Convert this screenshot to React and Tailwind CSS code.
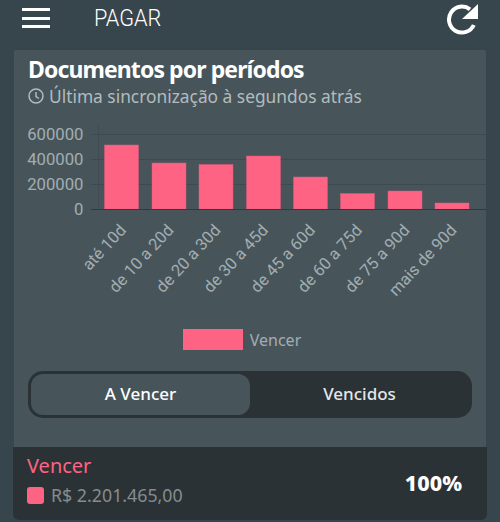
import React from "react";

const bars = [
  { label: "até 10d", x: 104.5, top: 145 },
  { label: "de 10 a 20d", x: 152, top: 163 },
  { label: "de 20 a 30d", x: 199, top: 164.5 },
  { label: "de 30 a 45d", x: 246.5, top: 156 },
  { label: "de 45 a 60d", x: 293.5, top: 177 },
  { label: "de 60 a 75d", x: 340.5, top: 193.5 },
  { label: "de 75 a 90d", x: 388, top: 191 },
  { label: "mais de 90d", x: 435, top: 203 },
];

const ticks = [
  { label: "600000", y: 134 },
  { label: "400000", y: 159 },
  { label: "200000", y: 184 },
  { label: "0", y: 209 },
];

function Chart() {
  // offsets: svg starts at x=14, y=120 of the page
  return (
    <svg width="472" height="200" viewBox="14 120 472 200" className="block shrink-0">
      <line x1="98.5" y1="125" x2="98.5" y2="209" stroke="#3f4c52" strokeWidth="1" />
      {ticks.slice(0, 3).map((t) => (
        <line key={t.y} x1="91" y1={t.y + 0.5} x2="486" y2={t.y + 0.5} stroke="#3d4a50" strokeWidth="1" />
      ))}
      {bars.map((b) => (
        <rect key={b.label} x={b.x} y={b.top} width="34" height={209 - b.top} fill="#ff6384" stroke="#d95a78" strokeWidth="0.5" />
      ))}
      <line x1="91" y1="209.5" x2="486" y2="209.5" stroke="#2f3a3f" strokeWidth="1.2" />
      {ticks.map((t) => (
        <text key={t.label} x="83.5" y={t.y + 6} textAnchor="end" fill="#a3adb1" fontSize="16.7" fontFamily="Roboto, sans-serif">
          {t.label}
        </text>
      ))}
      {bars.map((b) => (
        <text
          key={b.label}
          transform={`translate(${b.x + 22.5} 231) rotate(-47)`}
          textAnchor="end"
          fill="#a3adb1"
          fontSize="16.5"
          fontFamily="Roboto, sans-serif"
        >
          {b.label}
        </text>
      ))}
    </svg>
  );
}

export default function App() {
  return (
    <div className="w-[500px] h-[522px] overflow-hidden bg-[#37464d] font-['Noto_Sans',sans-serif] flex flex-col">
      <header className="h-[36px] mb-[14px] flex items-center pl-[22px] pr-[21px] shrink-0">
        <div className="w-[28px] flex flex-col gap-[5.5px]">
          <div className="h-[3px] bg-white" />
          <div className="h-[3px] bg-white" />
          <div className="h-[3px] bg-white" />
        </div>
        <div className="ml-[44px] text-white text-[23px] leading-none font-['Roboto',sans-serif] font-light scale-x-[0.94] origin-left">PAGAR</div>
        <svg className="ml-auto mt-[2px]" width="33" height="32" viewBox="0 0 33 32">
          <path d="M27.8 22A13 13 0 1 1 24 6.3" fill="none" stroke="#fff" strokeWidth="4" />
          <path d="M32 1V16H16Z" fill="#fff" />
        </svg>
      </header>

      <main className="mx-[14px] h-[397px] bg-[#47555b] rounded-t-[2px] shrink-0 flex flex-col">
        <div className="pl-[14px] pt-[5px] h-[70px] shrink-0">
          <div className="text-white font-bold text-[23px] leading-[28px] tracking-[-0.9px] whitespace-nowrap">Documentos por períodos</div>
          <div className="flex items-center gap-[5px] text-[#b3bbbe] text-[17.35px] leading-[22px] mt-[2px] whitespace-nowrap">
            <svg width="16" height="16" viewBox="0 0 16 16" fill="none" stroke="#b3bbbe" strokeWidth="1.5" className="shrink-0">
              <circle cx="8" cy="8" r="7" />
              <path d="M8 4V8.5L11 10.5" />
            </svg>
            <span>Última sincronização à segundos atrás</span>
          </div>
        </div>
        <Chart />
        <div className="flex items-center justify-center gap-[7px] mt-[9px] h-[21px] pr-[16px] shrink-0">
          <div className="w-[60px] h-[21px] bg-[#ff6384]" />
          <span className="text-[#a3adb1] text-[16px]">Vencer</span>
        </div>
        <div className="mt-[21px] mx-[14px] h-[47px] bg-[#2b3235] rounded-[15px] p-[3px] flex shrink-0">
          <div className="w-[219px] bg-[#47555b] rounded-[12px] flex items-center justify-center pb-[2px] text-white text-[17px] font-medium">A Vencer</div>
          <div className="flex-1 flex items-center justify-center pb-[2px] text-[#e4e7e8] text-[17px] font-medium">Vencidos</div>
        </div>
      </main>

      <footer className="mx-[13px] h-[73px] bg-[#2b3235] rounded-b-[6px] shrink-0 flex items-center justify-between pl-[14px] pr-[25px]">
        <div className="flex flex-col self-start pt-[7px]">
          <span className="text-[#ff6384] text-[20px] leading-[24px]">Vencer</span>
          <div className="flex items-center gap-[7px] mt-[7px]">
            <div className="w-[17px] h-[17px] bg-[#ff6384] rounded-[3px]" />
            <span className="text-[#868c8f] text-[17.8px] leading-[20px]">R$ 2.201.465,00</span>
          </div>
        </div>
        <span className="text-white font-extrabold text-[21.5px]">100%</span>
      </footer>
    </div>
  );
}
